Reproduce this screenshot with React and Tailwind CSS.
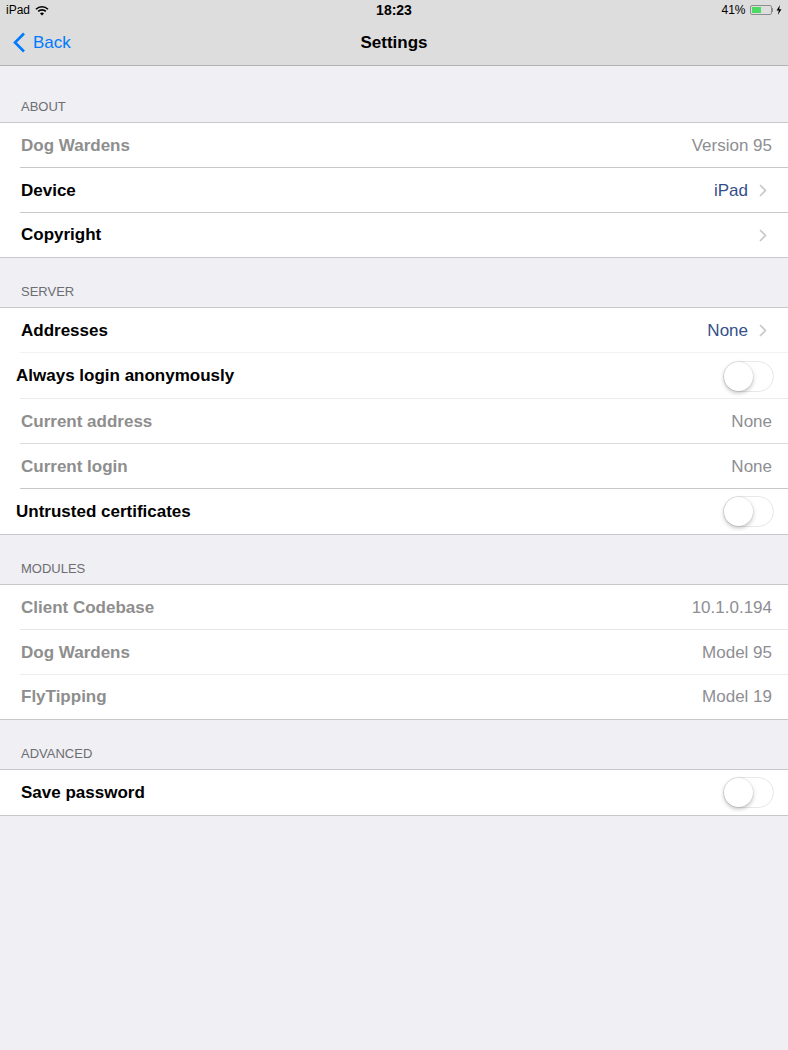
const font = { fontFamily: '"Liberation Sans", Arial, sans-serif' };

function Chevron() {
  return (
    <svg width="8" height="13" viewBox="0 0 8 13" className="ml-[11px]">
      <path d="M1 1l5.5 5.5L1 12" fill="none" stroke="#c7c7cc" strokeWidth="1.6" />
    </svg>
  );
}

function Toggle() {
  return (
    <div className="relative h-[31px] w-[51px] rounded-full border border-[#e8e8ec] bg-white">
      <div className="absolute left-0 top-0 h-[29px] w-[29px] rounded-full bg-white shadow-[0_2px_4px_rgba(0,0,0,0.25),0_0_0_0.5px_rgba(0,0,0,0.08)]" />
    </div>
  );
}

function Row({ label, value, dim, link, chevron, toggle, inset, last, sep = "bg-[#dcdce0]", h = "h-[45px]" }) {
  return (
    <div className={`relative flex items-center bg-white ${h} ${inset ? "pl-4" : "pl-[21px]"} ${chevron ? "pr-[21px]" : "pr-[14px]"}`}>
      <span className={`flex-1 text-[17px] font-bold ${dim ? "text-[#8e8e8e]" : "text-black"}`}>{label}</span>
      {value && (
        <span className={`text-[17px] ${link ? "text-[#34508a]" : "text-[#8e8e93]"} ${chevron ? "" : "mr-[2px]"}`}>{value}</span>
      )}
      {chevron && <Chevron />}
      {toggle && <Toggle />}
      {!last && <div className={`absolute bottom-0 left-[20px] right-0 h-px ${sep}`} />}
    </div>
  );
}

function Group({ title, first, children }) {
  return (
    <div>
      <div className={`${first ? "pt-[32px]" : "pt-[25px]"} pl-[21px] pb-[7px] text-[13px] leading-[17px] uppercase text-[#6d6d72]`}>
        {title}
      </div>
      <div className="border-y border-[#c8c7cc]">{children}</div>
    </div>
  );
}

export default function App() {
  return (
    <div className="min-h-[1050px] w-[788px] bg-[#efeff4]" style={font}>
      <div className="bg-[#dddddd] border-b border-[#b2b2b2]">
        <div className="relative flex h-[20px] items-center px-[6px] text-[12px] text-black">
          <span>iPad</span>
          <svg width="14" height="11" viewBox="0 0 14 11" className="ml-[5px]">
            <path d="M1 4.2a8.5 8.5 0 0 1 12 0" fill="none" stroke="#000" strokeWidth="1.6" />
            <path d="M3.2 6.4a5.4 5.4 0 0 1 7.6 0" fill="none" stroke="#000" strokeWidth="1.6" />
            <path d="M7 10.5l-2-2a2.8 2.8 0 0 1 4 0z" fill="#000" />
          </svg>
          <span className="absolute left-1/2 -translate-x-1/2 text-[14px] font-bold">18:23</span>
          <div className="ml-auto flex items-center">
            <span>41%</span>
            <div className="ml-[4px] flex h-[10px] w-[22px] items-center rounded-[2px] border border-[#8e8e8e] p-px">
              <div className="h-full w-[9px] bg-[#4cd964]" />
            </div>
            <div className="h-[4px] w-[1.5px] bg-[#8e8e8e]" />
            <svg width="6" height="10" viewBox="0 0 6 10" className="ml-[3px]">
              <path d="M4 0L0.5 5.5h2.3L1.8 10 5.5 4.3H3.2z" fill="#000" />
            </svg>
          </div>
        </div>
        <div className="relative flex h-[45px] items-center">
          <div className="flex items-center pl-[13px] text-[#007aff]">
            <svg width="13" height="21" viewBox="0 0 13 21">
              <path d="M11 1.5L2 10.5l9 9" fill="none" stroke="#007aff" strokeWidth="2.6" />
            </svg>
            <span className="ml-[7px] text-[17px]">Back</span>
          </div>
          <span className="absolute left-1/2 -translate-x-1/2 text-[17px] font-semibold text-black">Settings</span>
        </div>
      </div>

      <Group title="About" first>
        <Row label="Dog Wardens" value="Version 95" dim sep="bg-[#c8c7cc]" />
        <Row label="Device" value="iPad" link chevron sep="bg-[#c8c7cc]" />
        <Row label="Copyright" chevron last h="h-[44px]" />
      </Group>

      <Group title="Server">
        <Row label="Addresses" value="None" link chevron sep="bg-[#f2f2f4]" />
        <Row label="Always login anonymously" toggle inset h="h-[46px]" sep="bg-[#ebebee]" />
        <Row label="Current address" value="None" dim sep="bg-[#dcdce0]" />
        <Row label="Current login" value="None" dim sep="bg-[#c8c7cc]" />
        <Row label="Untrusted certificates" toggle inset last />
      </Group>

      <Group title="Modules">
        <Row label="Client Codebase" value="10.1.0.194" dim sep="bg-[#e5e5ea]" />
        <Row label="Dog Wardens" value="Model 95" dim sep="bg-[#ececf0]" />
        <Row label="FlyTipping" value="Model 19" dim last h="h-[44px]" />
      </Group>

      <Group title="Advanced">
        <Row label="Save password" toggle last />
      </Group>
    </div>
  );
}
